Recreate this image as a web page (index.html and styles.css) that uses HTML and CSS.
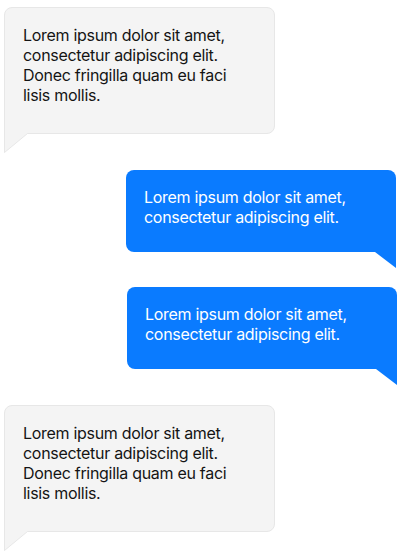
FILE: index.html
```html
<!DOCTYPE html>
<html lang="en">
<head>
<meta charset="utf-8">
<title>Chat</title>
<link rel="stylesheet" href="styles.css">
</head>
<body>
<div class="thread">
  <div class="msg msg-in">
    <div class="bubble bubble-in">Lorem ipsum dolor sit amet, consectetur adipiscing elit. Donec fringilla quam eu faci lisis mollis.</div>
    <svg class="tail tail-in" width="24" height="20" viewBox="0 0 24 20"><polygon points="0,0 24,0 0,20" fill="#f4f4f4"/><polyline points="23.5,0.5 0.5,19.5 0.5,0" fill="none" stroke="#e7e7e7" stroke-width="1"/></svg>
  </div>
  <div class="msg msg-out msg-out-a">
    <div class="bubble bubble-out">Lorem ipsum dolor sit amet, consectetur adipiscing elit.</div>
    <svg class="tail tail-out" width="21" height="16" viewBox="0 0 21 16"><polygon points="0,0 21,0 21,16" fill="#0a7bff"/></svg>
  </div>
  <div class="msg msg-out msg-out-b">
    <div class="bubble bubble-out">Lorem ipsum dolor sit amet, consectetur adipiscing elit.</div>
    <svg class="tail tail-out" width="21" height="16" viewBox="0 0 21 16"><polygon points="0,0 21,0 21,16" fill="#0a7bff"/></svg>
  </div>
  <div class="msg msg-in msg-in-b">
    <div class="bubble bubble-in">Lorem ipsum dolor sit amet, consectetur adipiscing elit. Donec fringilla quam eu faci lisis mollis.</div>
    <svg class="tail tail-in" width="24" height="20" viewBox="0 0 24 20"><polygon points="0,0 24,0 0,20" fill="#f4f4f4"/><polyline points="23.5,0.5 0.5,19.5 0.5,0" fill="none" stroke="#e7e7e7" stroke-width="1"/></svg>
  </div>
</div>
</body>
</html>
```
FILE: styles.css
```css
* { box-sizing: border-box; }
html, body { margin: 0; padding: 0; background: #ffffff; }
body {
  font-family: Inter, "Noto Sans", "Liberation Sans", sans-serif;
  font-size: 16px;
  line-height: 20px;
  letter-spacing: -0.3px;
}
.thread {
  display: flex;
  flex-direction: column;
  padding: 7px 0 0 0;
}
.msg {
  display: flex;
  flex-direction: column;
}
.msg-in {
  align-self: flex-start;
  margin-left: 4px;
  width: 271px;
}
.msg-in-b { margin-top: 20px; }
.msg-out {
  align-self: flex-end;
  width: 270px;
}
.msg-out-a { margin-top: 17px; margin-right: 6px; }
.msg-out-b { margin-top: 19px; margin-right: 5px; }
.bubble {
  border-radius: 8px;
}
.bubble-in {
  background: #f4f4f4;
  border: 1px solid #e7e7e7;
  border-bottom-left-radius: 0;
  color: #141414;
  padding: 17px 18px 28px 18px;
  height: 127px;
}
.bubble-out {
  background: #0a7bff;
  color: #ffffff;
  border-bottom-right-radius: 0;
  padding: 17px 18px 25px 18px;
  height: 82px;
}
.tail { display: block; flex: none; }
.tail-in { margin-top: -1px; align-self: flex-start; }
.tail-out { align-self: flex-end; }
```
